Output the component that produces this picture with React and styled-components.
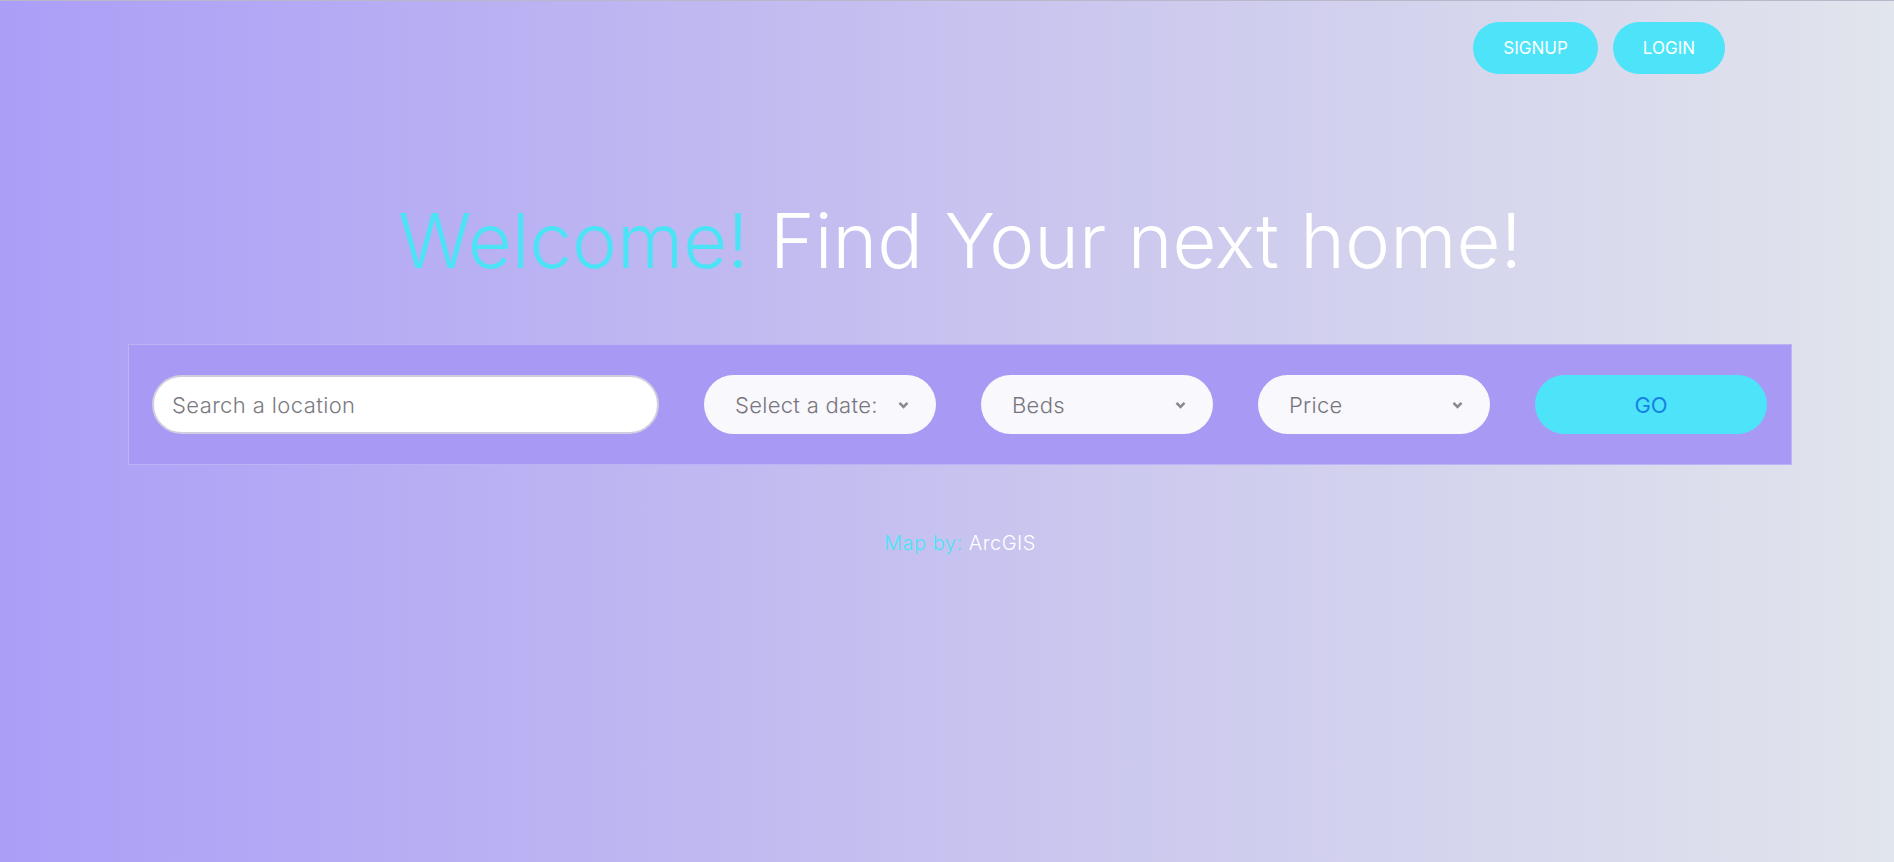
import React from 'react';
import styled, { createGlobalStyle } from 'styled-components';

const GlobalStyle = createGlobalStyle`
  html, body {
    margin: 0;
    padding: 0;
    height: 100%;
  }
  body {
    font-family: Inter, "Noto Sans", "Liberation Sans", sans-serif;
    overflow: hidden;
  }
  #root {
    min-height: 100%;
  }
`;

const Viewport = styled.div`
  width: 100%;
  height: 100vh;
  overflow: hidden;
  border-top: 1px solid #b9b7c9;
  box-sizing: border-box;
  background: linear-gradient(to right, #ab9ef7 0%, #c7c2ef 50%, #e1e5ec 100%);
`;

const Page = styled.div`
  width: 1920px;
  display: flex;
  flex-direction: column;
  align-items: center;
`;

const TopBar = styled.div`
  align-self: stretch;
  display: flex;
  justify-content: flex-end;
  gap: 15px;
  padding: 21px 195px 0 0;
`;

const PillButton = styled.button`
  height: 52px;
  padding: 0 ${p => p.$pad}px;
  border: none;
  border-radius: 26px;
  background: #4de4f9;
  color: #ffffff;
  font-family: inherit;
  font-size: 17px;
  font-weight: 400;
  text-transform: uppercase;
  cursor: pointer;
`;

const Heading = styled.h1`
  margin: 121px 0 0;
  font-size: 76px;
  font-weight: 300;
  line-height: 1.2;
  color: #ffffff;
`;

const Accent = styled.span`
  color: #4de3f7;
`;

const SearchPanel = styled.div`
  margin-top: 58px;
  width: 1664px;
  box-sizing: border-box;
  padding: 30px 23px;
  background: #a899f4;
  border: 1px solid rgba(255, 255, 255, 0.25);
  display: grid;
  grid-template-columns: 507px repeat(4, 232px);
  column-gap: 45px;
`;

const LocationInput = styled.input`
  height: 59px;
  box-sizing: border-box;
  border: 2px solid #cfcde0;
  border-radius: 30px;
  background: #ffffff;
  padding: 0 18px;
  font-family: inherit;
  font-size: 22px;
  font-weight: 300;
  letter-spacing: 0.4px;
  color: #555;
  outline: none;

  &::placeholder {
    color: #7a7a80;
  }
`;

const SelectBox = styled.div`
  height: 59px;
  box-sizing: border-box;
  border-radius: 30px;
  background: #f9f8fd;
  padding: 0 27px 0 31px;
  display: flex;
  align-items: center;
  justify-content: space-between;
  font-size: 22px;
  font-weight: 300;
  letter-spacing: 0.3px;
  color: #77767e;
  cursor: pointer;
`;

const Chevron = () => (
  <svg width="11" height="8" viewBox="0 0 11 8">
    <path d="M1.5 1.8 L5.5 5.8 L9.5 1.8" fill="none" stroke="#8a8990" strokeWidth="2.6" />
  </svg>
);

const GoButton = styled.button`
  height: 59px;
  border: none;
  border-radius: 30px;
  background: #4de4f9;
  color: #1682e6;
  font-family: inherit;
  font-size: 22px;
  font-weight: 400;
  cursor: pointer;
`;

const Credit = styled.p`
  margin: 66px 0 0;
  font-size: 20px;
  font-weight: 300;
  letter-spacing: 0.5px;
  color: #ffffff;
`;

const CreditLabel = styled.span`
  color: #4de3f7;
`;

const selects = ['Select a date:', 'Beds', 'Price'];

const App = () => {
  return (
    <Viewport>
      <GlobalStyle />
      <Page>
        <TopBar>
          <PillButton $pad={30}>Signup</PillButton>
          <PillButton $pad={30}>Login</PillButton>
        </TopBar>

        <Heading>
          <Accent>Welcome!</Accent> Find Your next home!
        </Heading>

        <SearchPanel>
          <LocationInput placeholder="Search a location" />
          {selects.map(label => (
            <SelectBox key={label}>
              <span>{label}</span>
              <Chevron />
            </SelectBox>
          ))}
          <GoButton>GO</GoButton>
        </SearchPanel>

        <Credit>
          <CreditLabel>Map by:</CreditLabel> ArcGIS
        </Credit>
      </Page>
    </Viewport>
  );
};

export default App;
